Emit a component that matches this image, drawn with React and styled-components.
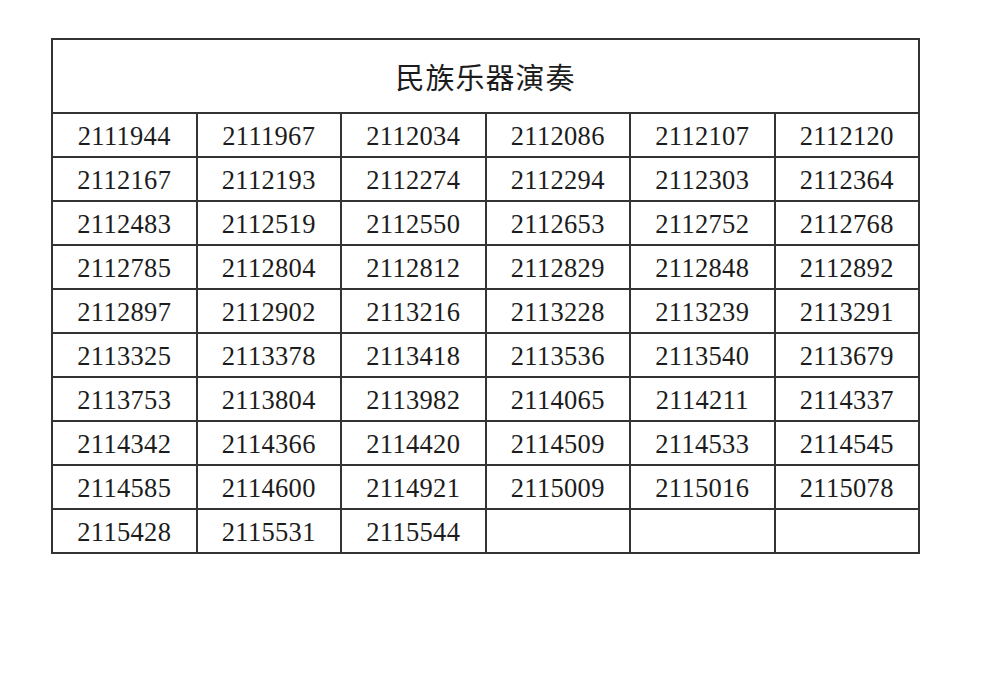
import React from "react";
import styled, { createGlobalStyle } from "styled-components";

const Global = createGlobalStyle`
  html, body { margin: 0; padding: 0; background: #fff; }
`;

const Page = styled.div`
  width: 1000px;
  height: 687px;
  box-sizing: border-box;
  padding: 38px 0 0 51px;
  background: #fff;
`;

const Table = styled.table`
  width: 869px;
  border-collapse: collapse;
  table-layout: fixed;
  border: 2px solid #333;
  color: #1c1c1c;
`;

const TitleCell = styled.th`
  box-sizing: border-box;
  height: 74px;
  padding: 0 0 1px 0;
  border: 2px solid #333;
  font-family: "Noto Sans CJK SC", sans-serif;
  font-weight: 400;
  font-size: 29px;
  text-align: center;
  vertical-align: middle;
  letter-spacing: 1px;
`;

const Cell = styled.td`
  box-sizing: border-box;
  height: 44px;
  padding: 3px 0 0 0;
  border: 2px solid #333;
  font-family: "Liberation Serif", "Times New Roman", serif;
  font-size: 26.5px;
  line-height: 1;
  text-align: center;
  vertical-align: middle;
  letter-spacing: 0.3px;
`;

const numbers = [
  "2111944","2111967","2112034","2112086","2112107","2112120",
  "2112167","2112193","2112274","2112294","2112303","2112364",
  "2112483","2112519","2112550","2112653","2112752","2112768",
  "2112785","2112804","2112812","2112829","2112848","2112892",
  "2112897","2112902","2113216","2113228","2113239","2113291",
  "2113325","2113378","2113418","2113536","2113540","2113679",
  "2113753","2113804","2113982","2114065","2114211","2114337",
  "2114342","2114366","2114420","2114509","2114533","2114545",
  "2114585","2114600","2114921","2115009","2115016","2115078",
  "2115428","2115531","2115544","","","",
];

const rows = [];
for (let i = 0; i < numbers.length; i += 6) rows.push(numbers.slice(i, i + 6));

export default function App() {
  return (
    <Page>
      <Global />
      <Table>
        <thead>
          <tr>
            <TitleCell colSpan={6}>民族乐器演奏</TitleCell>
          </tr>
        </thead>
        <tbody>
          {rows.map((r, i) => (
            <tr key={i}>
              {r.map((n, j) => (
                <Cell key={j}>{n}</Cell>
              ))}
            </tr>
          ))}
        </tbody>
      </Table>
    </Page>
  );
}
